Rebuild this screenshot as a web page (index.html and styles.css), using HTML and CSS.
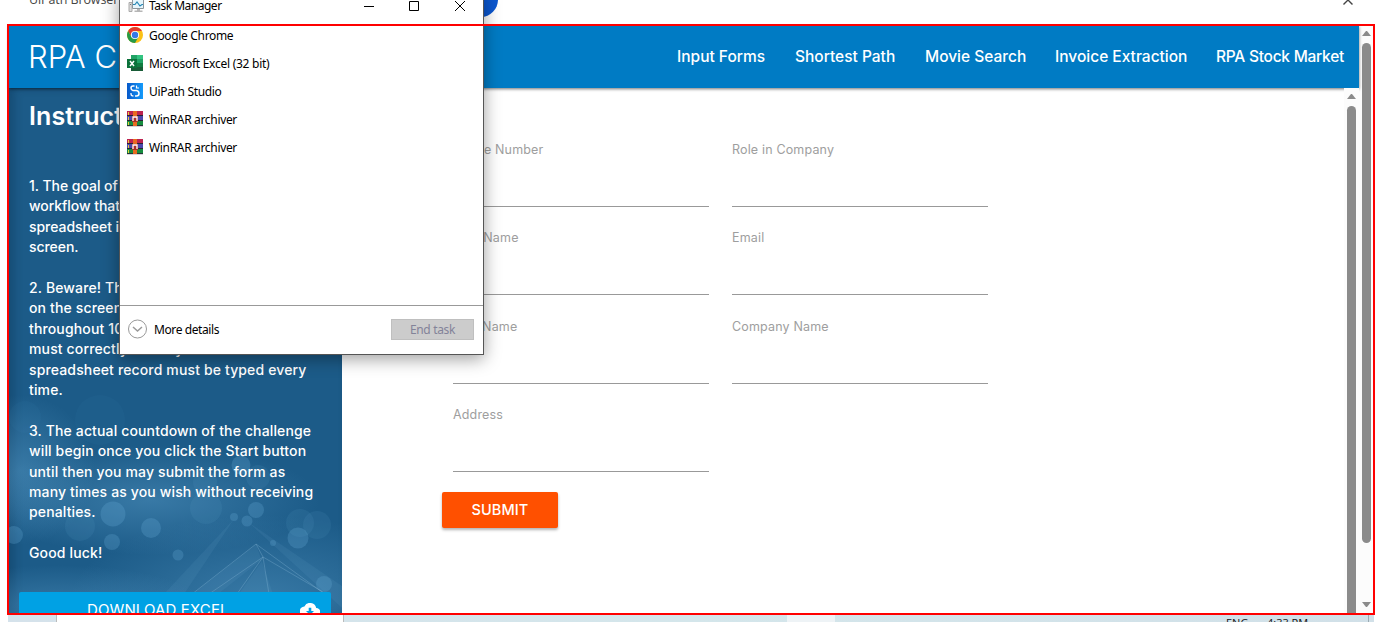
FILE: index.html
```html
<!DOCTYPE html>
<html lang="en">
<head>
<meta charset="utf-8">
<title>RPA Challenge</title>
<link rel="stylesheet" href="styles.css">
</head>
<body>
<div class="screen">
  <header class="ext-bar">
    <span class="ext-title">UiPath Browser Automation</span>
    <svg class="ext-close" width="12" height="12" viewBox="0 0 12 12"><path d="M1.500 1.500l9 9M10.500 1.500l-9 9" stroke="#444" stroke-width="1.400" fill="none"/></svg>
    <span class="ext-badge"></span>
  </header>

  <section class="viewport">
    <div class="page">
      <nav class="nav">
        <span class="brand">RPA Challenge</span>
        <ul class="links">
          <li class="l1">Input Forms</li><li class="l2">Shortest Path</li><li class="l3">Movie Search</li><li class="l4">Invoice Extraction</li><li class="l5">RPA Stock Market</li>
        </ul>
      </nav>
      <div class="content">
        <aside class="side">
          <svg class="bokeh" width="333" height="230" viewBox="9 383 333 230" preserveAspectRatio="none">
            <defs>
              <radialGradient id="g"><stop offset="0" stop-color="#5fa3cf" stop-opacity=".42"/><stop offset="1" stop-color="#5fa3cf" stop-opacity="0"/></radialGradient>
            </defs>
            <ellipse cx="150" cy="500" rx="170" ry="55" fill="url(#g)"/>
            <ellipse cx="20" cy="470" rx="75" ry="75" fill="url(#g)"/>
            <ellipse cx="260" cy="600" rx="190" ry="85" fill="url(#g)"/>
            <ellipse cx="60" cy="610" rx="150" ry="45" fill="url(#g)"/>
            <g fill="#6bb0da" fill-opacity=".25">
              <circle cx="113" cy="514" r="12.500"/><circle cx="14" cy="535" r="9"/><circle cx="112" cy="542" r="8"/><circle cx="151" cy="528" r="10"/><circle cx="178" cy="555" r="5.500"/><circle cx="234" cy="517" r="4"/><circle cx="247" cy="521" r="5.500"/><circle cx="256" cy="510" r="8"/><circle cx="298" cy="538" r="10.500"/><circle cx="324" cy="584" r="8"/><circle cx="241" cy="465" r="9.500"/><circle cx="273" cy="543" r="3"/>
            </g>
            <g fill="#6bb0da" fill-opacity=".1">
              <circle cx="80" cy="526" r="15"/><circle cx="205" cy="482" r="12"/><circle cx="206" cy="508" r="16"/><circle cx="258" cy="477" r="12"/><circle cx="300" cy="523" r="14"/><circle cx="317" cy="525" r="14"/>
            </g>
            <g fill="#6bb0da" fill-opacity=".04">
              <circle cx="25" cy="417" r="16"/><circle cx="100" cy="420" r="25"/>
            </g>
            <path d="M234 519l-50 75h-20zM248 522l94 64v22zM256 544l-64 50h26l46-36-25 36h34z" fill="#79b4d9" fill-opacity=".1"/>
            <path d="M256 544l-64 50M256 544l66 48M256 544l7 13-54 37M263 557l-26 37M263 557l6 37M263 557l60 35" fill="none" stroke="#8dbddb" stroke-opacity=".3"/>
          </svg>
          <h1>Instructions</h1>
          <div class="steps">
            <p class="goal">1. The goal of this challenge is to create a<br>workflow that will input data from a<br>spreadsheet into the form fields on the<br>screen.</p>
            <p>2. Beware! The fields will change position<br>on the screen after every submission<br>throughout 10 rounds thus the workflow<br>must correctly identify where each<br>spreadsheet record must be typed every<br>time.</p>
            <p>3. The actual countdown of the challenge<br>will begin once you click the Start button<br>until then you may submit the form as<br>many times as you wish without receiving<br>penalties.</p>
            <p>Good luck!</p>
          </div>
          <div class="download"><span>DOWNLOAD EXCEL</span>
            <svg width="20" height="14" viewBox="0 0 20 14"><path d="M16.200 5A6.300 6.300 0 0 0 4.400 3.400 5 5 0 0 0 5 13.400h11.200a4.200 4.200 0 0 0 0-8.400z" fill="#fff"/><path d="M10 12L6 8h2.700V4.800h2.600V8H14z" fill="#00a1e4"/></svg>
          </div>
        </aside>
        <main class="form">
          <div class="grid">
            <div class="field"><label>Phone Number</label></div>
            <div class="field"><label>Role in Company</label></div>
            <div class="field"><label>First Name</label></div>
            <div class="field"><label>Email</label></div>
            <div class="field"><label>Last Name</label></div>
            <div class="field"><label>Company Name</label></div>
            <div class="field"><label>Address</label></div>
          </div>
          <button class="submit">SUBMIT</button>
        </main>
        <div class="scroll inner"><i class="up"></i><i class="thumb"></i></div>
      </div>
    </div>
    <div class="scroll outer"><i class="up"></i><i class="thumb"></i><i class="down"></i></div>
  </section>

  <footer class="taskbar"><span class="preview"></span><span class="active"></span><span class="lang">ENG</span><span class="clock">4:33 PM</span><span class="edge"></span></footer>

  <div class="window">
    <div class="titlebar">
      <svg width="17" height="16" viewBox="0 0 17 16"><path d="M1 4.500h3v9H1z" fill="#ddd" stroke="#aaa"/><path d="M2 6.500h1" stroke="#777"/><path d="M4.500 1.500h11v9h-11z" fill="#e6f5fb" stroke="#8c969c"/><path d="M5 6.500h2l2-2.500 3 4 2-1.500h1" fill="none" stroke="#2587b5" stroke-width="1.200"/><path d="M9 11h3v2H9zM6.500 12.500h8v1.500h-8z" fill="#b6b6b6"/></svg>
      <span>Task Manager</span>
      <svg class="controls" width="104" height="12" viewBox="0 0 104 12"><path d="M1 6.500h10M46.500 1.500h9v9h-9zM92 1l10 10M102 1l-10 10" stroke="#000" fill="none"/></svg>
    </div>
    <ul class="apps">
      <li><svg width="16" height="16" viewBox="0 0 16 16"><circle cx="8" cy="8" r="8" fill="#fbc116"/><path d="M8 4h6.900A8 8 0 0 0 1.100 4l3.500 6z" fill="#e33b2e"/><path d="M1.100 4A8 8 0 0 0 8 16l3.500-6L8 8 4.500 10z" fill="#269a48"/><circle cx="8" cy="8" r="4.100" fill="#fff"/><circle cx="8" cy="8" r="3.200" fill="#3478e5"/></svg>Google Chrome</li>
      <li><svg width="16" height="16" viewBox="0 0 16 16"><path d="M4 0h12v16H4z" fill="#21a366"/><path d="M10 0h6v4h-6z" fill="#33c481"/><path d="M4 4h6v4H4z" fill="#107c41"/><path d="M4 8h12v8H4z" fill="#185c37"/><path d="M10 8h6v4h-6z" fill="#107c41"/><path d="M0 4h10v9H0z" fill="#0b713a"/><path d="M3 6l4 5M7 6l-4 5" stroke="#fff" stroke-width="1.500"/></svg><span class="wide">Microsoft Excel (32 bit)</span></li>
      <li><svg width="16" height="16" viewBox="0 0 16 16"><defs><linearGradient id="u"><stop stop-color="#0759ca"/><stop offset="1" stop-color="#159bfb"/></linearGradient></defs><path d="M0 0h16v16H0z" fill="url(#u)"/><path d="M7.500 3H6Q4 3 4 5t2 2.500h3.500Q12 8 12 10.500T9.500 13H8" fill="none" stroke="#fff" stroke-width="1.500"/><path d="M9.500 2.500v2.500h2.500M4 10v1q0 2 2.500 2" fill="none" stroke="#fff" stroke-width="1.200"/></svg>UiPath Studio</li>
      <li><svg width="16" height="16" viewBox="0 0 16 16"><use href="#rar"/></svg>WinRAR archiver</li>
      <li><svg width="16" height="16" viewBox="0 0 16 16"><g id="rar"><path d="M0 0h16v5H0z" fill="#bd2350"/><path d="M0 5h16v5H0z" fill="#4d48ad"/><path d="M0 10h16v5H0z" fill="#168d3f"/><path d="M0 4.500h16M0 9.500h16M0 14.700h16" stroke="#272335"/><path d="M1.500 1v3M1.500 6v3M1.500 11v3" stroke="#e7cf3c"/><path d="M6 0h4v15H6z" fill="#e86a20"/><path d="M5 5h6v6H5z" fill="#a92f28"/><path d="M6 10V6h4v4" fill="none" stroke="#fff" stroke-width="1.300"/></g></svg>WinRAR archiver</li>
    </ul>
    <div class="bottom">
      <svg width="20" height="20" viewBox="0 0 20 20"><circle cx="10.500" cy="10" r="9" fill="none" stroke="#999"/><path d="M6 8l4.500 4 4.500-4" fill="none" stroke="#999" stroke-width="1.500"/></svg>
      <span>More details</span><button class="end" disabled>End task</button>
    </div>
  </div>
  <div class="outline"></div>
</div>
</body>
</html>
```
FILE: styles.css
```css
* { box-sizing: border-box; }
body { margin: 0; background: #fff; font-family: Inter, sans-serif; }
.screen { position: relative; width: 1382px; height: 639px; overflow: hidden; }
.ext-bar { position: relative; display: flex; justify-content: space-between; height: 24px; padding: 0 28px 0 29px; overflow: hidden; }
.ext-title { font: 12.500px/16px "Open Sans", sans-serif; letter-spacing: -.1px; color: #444; margin-top: -8px; }
.ext-close { margin-top: -6px; }
.ext-badge { position: absolute; left: 464px; top: -18px; width: 34px; height: 35px; border-radius: 50%; background: #0b57d0; }
.viewport { display: flex; width: 1366px; height: 591px; margin-left: 8px; padding: 2px 0 2px 1px; }
.page { width: 1350px; display: flex; flex-direction: column; }
.nav { position: relative; z-index: 1; flex: none; height: 62px; background: #007bc4; color: #fff; display: flex; align-items: center; justify-content: space-between; padding: 0 15px 0 19px; box-shadow: 0 1px 3px rgba(0,0,0,.55); }
.brand { margin-top: -2px; font-size: 31px; font-weight: 350; white-space: nowrap; }
.links { display: flex; gap: 30px; list-style: none; margin: -1px 0 0; padding: 0; font-size: 15.500px; font-weight: 450; white-space: nowrap; }
.l1 { width: 88px; }
.l2 { width: 100px; }
.l3 { width: 100px; }
.l4 { width: 131px; }
.l5 { width: 128px; letter-spacing: -.25px; }
.content { display: flex; height: 525px; }
.side { position: relative; flex: none; width: 333px; height: 525px; overflow: hidden; padding: 11px 11px 0 20px; background: #1c5b88; color: #fff; box-shadow: inset 5px 0 8px rgba(0,30,60,.25); }
.bokeh { position: absolute; left: 0; bottom: 0; }
h1 { position: relative; margin: 1px 0 0; font-size: 25px; line-height: 32px; font-weight: 600; letter-spacing: .1px; }
.steps { position: relative; margin-top: 44px; height: 388px; font-size: 14px; font-weight: 450; letter-spacing: .14px; line-height: 20.400px; white-space: nowrap; }
.steps p { margin: 0 0 20.400px; }
.steps .goal { letter-spacing: -.05px; }
.download { position: relative; width: 312px; height: 36px; margin: 28px 0 0 -10px; padding: 0 11px 0 68px; display: flex; justify-content: space-between; background: #00a1e4; border-radius: 2px; font-size: 15px; letter-spacing: .12px; line-height: 36px; }
.download svg { margin-top: 11px; }
.form { flex: 1; padding: 51px 0 0 100px; }
.grid { display: grid; grid-template-columns: 256px 256px; column-gap: 23px; grid-auto-rows: 88.400px; margin-left: 11px; }
.field { height: 68px; padding-top: 1px; border-bottom: 1px solid #999; color: #9e9e9e; font-size: 12.500px; letter-spacing: .16px; line-height: 20px; }
.submit { display: block; width: 116px; height: 36px; margin-top: -1px; padding: 0; border: 0; border-radius: 2px; background: #ff5000; color: #fff; font: 450 14.500px Inter, sans-serif; letter-spacing: .1px; box-shadow: 0 2px 3px rgba(0,0,0,.3); }
.scroll { display: flex; flex-direction: column; align-items: center; background: #fcfcfc; width: 15px; }
.scroll i { flex: none; width: 9px; }
.up { margin-top: 5px; border: 4.500px solid transparent; border-top: 0; border-bottom: 5px solid #8b8b8b; }
.down { margin-top: 59px; border: 4.500px solid transparent; border-bottom: 0; border-top: 5px solid #8b8b8b; }
.thumb { margin-top: 7px; border-radius: 5px; background: #8b8b8b; }
.outer .thumb { height: 500px; }
.inner { position: relative; z-index: 2; }
.inner .up { margin-top: 6px; }
.inner .thumb { height: 507px; border-radius: 5px 5px 0 0; }
.taskbar { position: relative; display: flex; width: 1366px; height: 7px; margin-left: 8px; overflow: hidden; background: linear-gradient(90deg, #d5e2eb, #d4e6eb 50%, #d1e0e8); }
.preview { width: 288px; margin-left: 48px; border: solid #bbb; border-width: 0 1px; background: #fff; }
.active { width: 48px; margin-left: 443px; background: #eef3f6; }
.lang, .clock { font: 11px/14px "Open Sans", sans-serif; color: #111; white-space: nowrap; margin-top: 1px; }
.lang { width: 41px; margin-left: 391px; }
.edge { position: absolute; right: 5px; top: 0; width: 1px; height: 7px; background: #9cabb3; }
.window { position: absolute; z-index: 5; left: 119px; top: -10px; width: 365px; height: 365px; border: 1px solid #555; background: #fff; box-shadow: 0 4px 16px rgba(0,0,0,.38); font: 12px "Noto Sans", sans-serif; letter-spacing: -.33px; color: #000; }
.titlebar { display: flex; align-items: center; height: 29px; padding: 0 8px; }
.titlebar span { margin-left: 4px; letter-spacing: -.5px; }
.controls { margin-left: auto; margin-right: 8px; }
.apps { list-style: none; height: 286px; margin: 0; padding: 1px 7px 0; border-bottom: 1px solid #999; }
.apps li { display: flex; align-items: center; gap: 6px; height: 28px; line-height: 15px; }
.wide { letter-spacing: -.26px; }
.bottom { display: flex; align-items: center; height: 46px; padding: 0 9px 0 7px; }
.bottom span { margin-left: 7px; letter-spacing: -.4px; }
.end { margin-left: auto; width: 83px; height: 21px; padding: 0; border: 1px solid #bfbfbf; background: #ccc; color: #838399; font: 12px "Noto Sans", sans-serif; letter-spacing: -.33px; }
.outline { position: absolute; z-index: 6; left: 7px; top: 24px; width: 1368px; height: 591px; border: 2px solid #f00; pointer-events: none; }
```
